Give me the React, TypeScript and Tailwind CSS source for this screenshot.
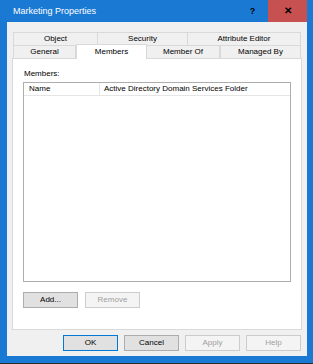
import type { ReactNode } from 'react';

function BackTab({ label, className = '' }: { label: string; className?: string }) {
  return (
    <div
      className={`flex items-center justify-center border border-b-0 border-[#d9d9d9] bg-[#f0f0f0] text-black ${className}`}
    >
      {label}
    </div>
  );
}

function DlgButton({
  children,
  disabled = false,
  primary = false,
  className = '',
}: {
  children: ReactNode;
  disabled?: boolean;
  primary?: boolean;
  className?: string;
}) {
  const look = disabled
    ? 'border-[#cccccc] bg-[#f4f4f4] text-[#a0a0a0]'
    : primary
      ? 'border-[#0078d7] bg-[#e1e1e1] text-black'
      : 'border-[#adadad] bg-[#e1e1e1] text-black';

  return (
    <div className={`flex h-[16px] w-[55px] items-center justify-center border ${look} ${className}`}>
      {children}
    </div>
  );
}

export default function App() {
  return (
    <div
      className="flex h-[364px] w-[313px] flex-col border-b border-[#2a2a2a] bg-[#1a79d3] pb-[7px] text-[8px] leading-none"
      style={{ fontFamily: '"Liberation Sans", Arial, sans-serif' }}
    >
      {/* barra de título */}
      <div className="flex h-[22px] shrink-0 items-center pr-[6px]">
        <div className="flex-1 pl-[13px] pt-[1px] text-[9px] text-white">Marketing Properties</div>
        <div className="flex h-full w-[31px] items-center justify-center text-[9px] font-bold text-black">?</div>
        <div className="flex h-full w-[39px] items-center justify-center bg-[#c75050] text-[10px] font-bold text-black">
          ✕
        </div>
      </div>

      {/* área do diálogo */}
      <div className="ml-[7px] mr-[6px] flex flex-1 flex-col bg-[#f0f0f0] px-[5px] pt-[10px]">
        <div className="mx-[1px] flex h-[13px]">
          <BackTab label="Object" className="w-[85px]" />
          <BackTab label="Security" className="w-[90px] border-l-0" />
          <BackTab label="Attribute Editor" className="flex-1 border-l-0" />
        </div>
        <div className="relative mx-[1px] flex h-[13px]">
          <BackTab label="General" className="w-[63px]" />
          <div className="z-10 -mt-[1px] mb-[-1px] flex w-[71px] items-center justify-center border border-b-0 border-[#d9d9d9] bg-white">
            Members
          </div>
          <BackTab label="Member Of" className="w-[73px] border-l-0" />
          <BackTab label="Managed By" className="flex-1" />
        </div>

        <div className="flex h-[272px] flex-col border border-[#d9d9d9] bg-white px-[10px] pt-[11px]">
          <div className="mb-[4px] pl-[1px]">Members:</div>
          <div className="flex h-[200px] flex-col border border-[#adadad] bg-white">
            <div className="flex h-[13px] items-center border-b border-[#e5e5e5]">
              <div className="flex h-full w-[76px] items-center border-r border-[#e5e5e5] pl-[5px]">Name</div>
              <div className="pl-[4px]">Active Directory Domain Services Folder</div>
            </div>
          </div>
          <div className="mt-[10px] flex gap-[7px]">
            <DlgButton>Add...</DlgButton>
            <DlgButton disabled>Remove</DlgButton>
          </div>
        </div>

        <div className="mt-[5px] flex justify-end gap-[6px] pr-[1px]">
          <DlgButton primary>OK</DlgButton>
          <DlgButton>Cancel</DlgButton>
          <DlgButton disabled>Apply</DlgButton>
          <DlgButton disabled>Help</DlgButton>
        </div>
      </div>
    </div>
  );
}
